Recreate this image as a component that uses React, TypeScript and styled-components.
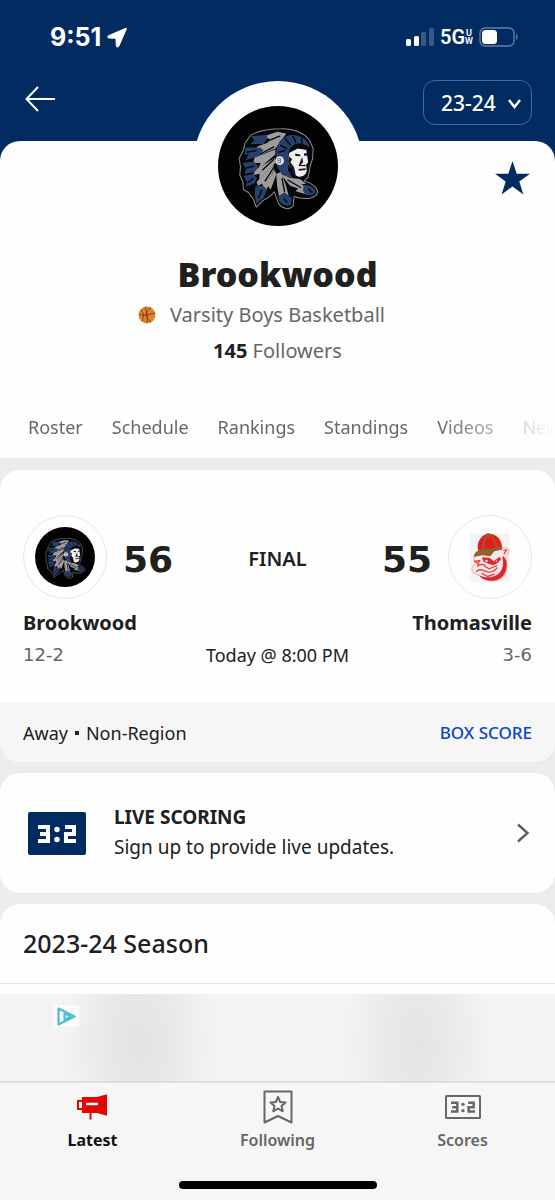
import React from 'react';
import styled, { createGlobalStyle } from 'styled-components';

const navy = '#022b62';
const ink = '#202020';
const muted = '#676767';
const wideDigits = '"DejaVu Sans", "Noto Sans", sans-serif';

const GlobalStyle = createGlobalStyle`
  * { box-sizing: border-box; }
  body { margin: 0; background: #ececec; color: ${ink}; font-family: "Noto Sans", sans-serif; font-size: 18px; line-height: 26px; }
  h1, h2, p, ul { margin: 0; padding: 0; }
  button, select { font: inherit; color: inherit; background: none; border: 0; padding: 0; cursor: pointer; }
  a { color: inherit; text-decoration: none; }
  svg { display: block; flex: none; }
`;

const Page = styled.div`
  min-height: 100vh;
  display: flex;
  flex-direction: column;
`;

const Header = styled.header`
  background: ${navy};
  color: #fff;
  padding-bottom: 36px;
  margin-bottom: -20px;
`;

const StatusBar = styled.div`
  height: 74px;
  padding: 0 37px 0 50px;
  display: flex;
  align-items: center;
  justify-content: space-between;
  font-family: Inter, sans-serif;
  font-weight: 700;
`;

const StatusGroup = styled.div`
  display: flex;
  align-items: center;
  gap: 6px;
`;

const Time = styled.span`
  font-size: 25px;
`;

const Network = styled.span`
  display: flex;
  align-items: center;
  font-size: 20px;
  font-weight: 600;
  font-family: Roboto, sans-serif;
`;

const NetworkSub = styled.span`
  display: flex;
  flex-direction: column;
  font-size: 9px;
  line-height: 8px;
  text-align: center;
`;

const NavBar = styled.div`
  display: flex;
  align-items: center;
  justify-content: space-between;
  padding: 6px 23px 0 25px;
`;

const BackButton = styled.button`
  margin-bottom: 8px;
`;

const SeasonPicker = styled.label`
  position: relative;
  display: block;
`;

const SeasonSelect = styled.select`
  appearance: none;
  width: 109px;
  height: 45px;
  padding-left: 17px;
  border: 1px solid #45689f;
  border-radius: 12px;
  font-size: 21px;
  font-weight: 500;
`;

const PickerArrow = styled.svg`
  position: absolute;
  right: 11px;
  top: 19px;
  pointer-events: none;
`;

const Profile = styled.section`
  position: relative;
  background: #fefefe;
  border-radius: 20px 20px 0 0;
  display: flex;
  flex-direction: column;
  align-items: center;
`;

const TeamBadge = styled.div`
  width: 170px;
  height: 170px;
  margin-top: -60px;
  border-radius: 50%;
  background: #fefefe;
  display: grid;
  place-items: center;
`;

const FavoriteButton = styled.button`
  position: absolute;
  right: 25px;
  top: 20px;
`;

const TeamName = styled.h1`
  font-size: 34px;
  line-height: 46px;
  font-weight: 900;
`;

const Detail = styled.p`
  display: flex;
  align-items: center;
  gap: 14px;
  margin-top: 5px;
  padding-right: 32px;
  font-size: 20px;
  color: ${muted};
`;

const Followers = styled.p`
  margin-top: 10px;
  font-size: 20px;
  color: ${muted};
  strong { color: ${ink}; }
`;

const SectionTabs = styled.nav`
  align-self: stretch;
  display: flex;
  gap: 29px;
  margin-top: 50px;
  padding: 0 0 18px 28px;
  overflow: hidden;
  white-space: nowrap;
  color: ${muted};
  mask-image: linear-gradient(to left, transparent 0, #000 120px);
`;

const Stack = styled.main`
  flex: 1;
  display: flex;
  flex-direction: column;
  gap: 11px;
  padding-top: 12px;
`;

const Card = styled.section`
  background: #fefefe;
  border-radius: 20px;
  overflow: hidden;
`;

const Matchup = styled.div`
  display: grid;
  grid-template-columns: 1fr auto 1fr;
  align-items: center;
  padding: 45px 23px 35px;
`;

const Side = styled.div<{ $away?: boolean }>`
  display: flex;
  align-items: center;
  gap: 16px;
  flex-direction: ${(p) => (p.$away ? 'row-reverse' : 'row')};
`;

const LogoRing = styled.div`
  width: 84px;
  height: 84px;
  border: 1px solid #e6e6e6;
  border-radius: 50%;
  display: grid;
  place-items: center;
`;

const Score = styled.span`
  padding-top: 5px;
  font-family: ${wideDigits};
  font-size: 36px;
  line-height: 44px;
  font-weight: 700;
`;

const GameState = styled.span`
  padding-top: 4px;
  font-size: 20px;
  font-weight: 600;
  text-align: center;
`;

const School = styled.span<{ $end?: boolean }>`
  margin-top: 11px;
  font-size: 20px;
  font-weight: 700;
  text-align: ${(p) => (p.$end ? 'right' : 'left')};
`;

const Record = styled.span<{ $end?: boolean }>`
  margin-top: 6px;
  font-family: ${wideDigits};
  color: ${muted};
  text-align: ${(p) => (p.$end ? 'right' : 'left')};
`;

const GameTime = styled.span`
  grid-column: 2;
  margin-top: 6px;
`;

const Spacer = styled.span``;

const CardFooter = styled.div`
  display: flex;
  justify-content: space-between;
  align-items: center;
  height: 59px;
  padding: 0 23px;
  background: #f6f6f6;
`;

const GameKind = styled.span`
  display: flex;
  align-items: center;
  gap: 7px;
`;

const Separator = styled.span`
  width: 4px;
  height: 4px;
  background: ${ink};
`;

const BoxScoreLink = styled.a`
  color: #0a46c4;
  font-size: 17px;
  font-weight: 500;
`;

const LiveRow = styled.a`
  display: flex;
  align-items: center;
  padding: 30px 25px 30px 28px;
  min-height: 120px;
`;

const LiveText = styled.div`
  flex: 1;
  margin: 0 0 2px 28px;
  display: flex;
  flex-direction: column;
  gap: 4px;
`;

const LiveTitle = styled.h2`
  font-size: 19px;
  line-height: 26px;
  font-weight: 700;
`;

const LiveCopy = styled.p`
  font-size: 19px;
`;

const SeasonCard = styled(Card)`
  flex: 1;
  border-radius: 20px 20px 0 0;
`;

const SeasonTitle = styled.h2`
  padding: 24px 23px 25px;
  font-size: 25px;
  line-height: 30px;
  font-weight: 500;
  border-bottom: 1px solid #e4e4e4;
`;

const AdBanner = styled.aside`
  height: 87px;
  padding: 11px 54px;
  background:
    radial-gradient(ellipse 74px 130px at 139px 48px, #e3e3e3 0, #e8e8e8 45%, #eeeeee 75%, transparent 100%),
    radial-gradient(ellipse 70px 130px at 417px 52px, #e4e4e4 0, #e9e9e9 45%, #eeeeee 75%, transparent 100%),
    #f3f3f3;
`;

const AdChoice = styled.a`
  display: grid;
  place-items: center;
  width: 25px;
  height: 22px;
  background: #fbfbfb;
`;

const Dock = styled.footer`
  background: #f6f6f6;
  border-top: 2px solid #dedede;
`;

const DockTabs = styled.nav`
  display: grid;
  grid-template-columns: repeat(3, 1fr);
  height: 98px;
`;

const DockTab = styled.button<{ $active?: boolean }>`
  display: flex;
  flex-direction: column;
  align-items: center;
  justify-content: flex-start;
  padding-top: 6px;
  font-size: 16px;
  line-height: 24px;
  font-weight: ${(p) => (p.$active ? 700 : 600)};
  color: ${(p) => (p.$active ? '#111' : muted)};
`;

const DockIcon = styled.span`
  display: grid;
  place-items: center;
  height: 36px;
  margin-bottom: 3px;
`;

const HomeIndicator = styled.div`
  width: 198px;
  height: 8px;
  margin: 0 auto 11px;
  border-radius: 4px;
  background: #000;
`;

function ChiefLogo({ size }: { size: number }) {
  return (
    <svg width={size} height={size} viewBox="69 94 358 358" role="img" aria-label="Brookwood logo">
      <circle cx="248" cy="273" r="179" fill="#020203" />
      <path d="M258 162 C292 160 326 174 341 195 L353 220 L351 252 L344 273 L338 306 L326 318 C348 322 367 338 366 352 C362 369 332 376 296 364 L293 393 C279 407 259 399 249 384 L237 350 C227 364 214 371 203 376 L183 396 L175 373 L160 352 L145 344 L143 320 L134 300 L136 275 L132 250 L145 226 L149 206 L166 181 C190 168 220 162 258 162Z" fill="#07080c" stroke="#918d8b" strokeWidth="3" strokeLinejoin="round" />
      <g fill="#a09c9c">
        <path d="M207 184 L246 171 L273 176 L257 197 L213 207 L225 194Z" />
        <path d="M188 214 L246 193 L254 201 L241 221 L190 242 L202 226 L174 229Z" />
        <path d="M178 248 L240 224 L240 239 L189 282 L196 264 L174 264Z" />
        <path d="M178 286 L238 249 L241 263 L192 313 L193 296 L175 300Z" />
        <path d="M184 321 L234 270 L236 286 L205 340 L201 325 L188 333Z" />
        <path d="M205 335 L238 285 L243 298 L226 344 L218 333 L213 348Z" />
        <path d="M243 296 L257 291 L271 329 L280 362 L266 353 L251 363 L245 331Z" />
        <path d="M256 297 L272 302 L324 331 L332 357 L300 348 L308 340 L284 332Z" />
        <path d="M282 308 L313 312 L332 326 L309 329Z" />
      </g>
      <g fill="#28406c">
        <path d="M168 184 L214 180 L216 191 L204 207 L164 208 L178 198Z" />
        <path d="M151 218 L194 218 L205 226 L190 243 L151 256 L161 238 L148 239Z" />
        <path d="M142 263 L178 260 L190 276 L177 292 L148 296 L153 281Z" />
        <path d="M145 303 L174 296 L185 309 L178 325 L151 335 L156 321Z" />
        <path d="M180 334 L204 332 L215 343 L206 366 L184 386 L179 363Z" />
        <path d="M249 363 L266 354 L289 367 L287 388 C275 396 258 388 251 377Z" />
        <path d="M326 330 C347 329 361 343 360 351 C354 363 339 361 329 359 L322 345Z" />
        <path d="M243 250 C239 220 253 190 279 182 C309 176 337 193 343 218 L324 208 C298 200 282 216 279 235 L278 285 L293 310 L260 299 L246 276Z" />
      </g>
      <g fill="none" stroke="#05070c" strokeWidth="4">
        <path d="M250 232 L270 226 M254 211 L275 221 M269 190 L285 211 M293 184 L302 205 M318 190 L320 209" />
        <path d="M201 286 L236 253 M194 238 L237 215 M209 319 L236 276 M216 199 L255 183 M260 310 L268 352 M276 314 L317 338" />
        <path d="M154 232 L184 227 M153 279 L176 273 M157 323 L174 310 M189 370 L200 344 M265 370 L276 382 M338 340 L350 352" />
      </g>
      <path d="M281 232 L305 220 L332 221 L335 243 L338 262 L332 269 L334 289 C328 307 310 309 300 300 L289 281 L279 266Z" fill="#f1efef" />
      <path d="M299 236 L314 239 L315 244 L300 243Z M326 235 L335 235 L334 242 L326 243Z M320 246 L323 262 L315 270 L330 269 L331 274 L309 273Z M308 282 L331 280 L330 285 L312 287Z M282 245 L290 253 L285 262 L296 277 L301 300 L287 283 L278 260Z" fill="#17171a" />
      <path d="M281 223 L335 212 L339 226 L307 221 L281 234Z" fill="#07080c" />
      <circle cx="253" cy="257" r="13" fill="#e3e1e1" />
      <path d="M248 250 V264 M256 250 V264 M248 251 H256 M248 257 H256 M248 263 H256" stroke="#55555b" strokeWidth="2" />
    </svg>
  );
}

function BulldogLogo() {
  return (
    <svg width="40" height="49" viewBox="69 67 120 146" role="img" aria-label="Thomasville logo">
      <path d="M69 67H189V213H69Z" fill="#f5f4f3" />
      <path d="M160 112 L174 110 L184 114 L184 128 L177 141 L180 165 C181 192 162 211 137 210 C119 210 101 203 96 193 L80 187 L74 174 L82 158 L80 141 L94 133Z" fill="#fbe6e6" stroke="#eb8c8f" strokeWidth="2" />
      <path d="M170 136 L178 150 C184 182 168 208 137 210 C119 210 101 203 97 193 C116 203 139 201 153 190 C169 177 171 158 166 140Z" fill="#df252c" />
      <path d="M104 139 L128 141 L140 151 L158 138 L162 146 L151 157 L139 163 L124 159 L110 153Z" fill="#dc2a33" />
      <path d="M112 147 L124 150 L119 154Z M145 152 L152 147 L149 153Z" fill="#fff" />
      <path d="M84 151 L98 149 L93 159Z M90 166 C99 158 112 160 116 168 L126 174 L151 164 M87 183 C97 172 106 178 119 182 C130 187 143 181 151 170 M104 187 L122 197 L143 190 M169 118 L178 118 L171 130" fill="none" stroke="#e0444b" strokeWidth="4" />
      <path d="M92 111 C91 87 108 70 124 68 C149 69 167 88 165 114 L141 116 L119 120 L95 125Z" fill="#e51c20" />
      <path d="M80 138 C82 119 104 112 128 114 L164 108 L167 116 L142 121 L130 136 L107 133Z" fill="#8c632f" />
      <path d="M124 68 C114 79 108 94 108 116 M127 69 C139 79 147 94 148 113 M124 68 V84" fill="none" stroke="#96602c" strokeWidth="5" />
      <path d="M118 90 V105 H126" fill="none" stroke="#9a3c25" strokeWidth="3" />
    </svg>
  );
}

function Basketball() {
  return (
    <svg width="18" height="18" viewBox="0 0 18 18" aria-hidden="true">
      <circle cx="9" cy="9" r="8.5" fill="#e3822b" />
      <path d="M1 8 C6 11 12 8 17 7 M7 1 C9 5 10 12 9 17 M13 2 C7 5 6 11 13 16 M3 4 C6 7 6 11 4 15" fill="none" stroke="#5b3a20" strokeWidth="0.8" />
    </svg>
  );
}

/* Seven-segment style "3:2" used by both scoreboard icons. */
function ScoreDigits({ color }: { color: string }) {
  return (
    <g>
      <path d="M0 2 H10 V16 H0 M2 9 H10 M27 2 H36 V9 H28 V16 H38" fill="none" stroke={color} strokeWidth="4" />
      <circle cx="19" cy="4.500" r="2.700" fill={color} />
      <circle cx="19" cy="14.500" r="2.700" fill={color} />
    </g>
  );
}

const sections = ['Roster', 'Schedule', 'Rankings', 'Standings', 'Videos', 'News'];

export default function App() {
  return (
    <Page>
      <GlobalStyle />
      <Header>
        <StatusBar>
          <StatusGroup>
            <Time>9:51</Time>
            <svg width="20" height="21" viewBox="0 0 20 21" aria-hidden="true">
              <path d="M19 1.200 L1.500 8.700 C.3 9.300 .6 10.900 2 11 L9 11.200 L9.300 18.800 C9.400 20.300 11.200 20.500 11.800 19.200 L19.300 2 C19.600 1.300 19.400 1 19 1.200Z" fill="#fff" stroke="#fff" strokeLinejoin="round" />
            </svg>
          </StatusGroup>
          <StatusGroup>
            <svg width="28" height="18" viewBox="0 0 28 18" aria-hidden="true">
              <rect x="0" y="11" width="5" height="7" rx="1.500" fill="#fff" />
              <rect x="8" y="8" width="5" height="10" rx="1.500" fill="#fff" />
              <rect x="15" y="4" width="5" height="14" rx="1.500" fill="#38588a" />
              <rect x="23" y="0" width="5" height="18" rx="1.500" fill="#38588a" />
            </svg>
            <Network>
              5G
              <NetworkSub>
                <span>U</span>
                <span>W</span>
              </NetworkSub>
            </Network>
            <svg width="39" height="20" viewBox="0 0 39 20" aria-hidden="true">
              <rect x="1" y="1" width="34" height="18" rx="5" fill="none" stroke="#6680a8" strokeWidth="1.300" />
              <rect x="3" y="3" width="15" height="14" rx="3.500" fill="#fff" />
              <path d="M37 7 C39 8 39 12 37 13Z" fill="#6680a8" />
            </svg>
          </StatusGroup>
        </StatusBar>
        <NavBar>
          <BackButton aria-label="Back">
            <svg width="30" height="26" viewBox="0 0 30 26" fill="none" stroke="#fff" strokeWidth="2">
              <path d="M13 1 L1.500 13 L13 25 M2 13 H30" />
            </svg>
          </BackButton>
          <SeasonPicker>
            <SeasonSelect aria-label="Season" defaultValue="23-24">
              <option>23-24</option>
            </SeasonSelect>
            <PickerArrow width="13" height="10" viewBox="0 0 13 10" fill="none" stroke="#fff" strokeWidth="2.500">
              <path d="M1 1 L6.500 8 L12 1" />
            </PickerArrow>
          </SeasonPicker>
        </NavBar>
      </Header>

      <Profile>
        <TeamBadge>
          <ChiefLogo size={120} />
        </TeamBadge>
        <FavoriteButton aria-label="Favorite">
          <svg width="35" height="34" viewBox="0 0 35 34">
            <path d="M17.500 0 L21.700 12.700 H35 L24.300 20.600 L28.400 33.500 L17.500 25.500 L6.600 33.500 L10.700 20.600 L0 12.700 H13.300Z" fill={navy} />
          </svg>
        </FavoriteButton>
        <TeamName>Brookwood</TeamName>
        <Detail>
          <Basketball />
          Varsity Boys Basketball
        </Detail>
        <Followers>
          <strong>145</strong> Followers
        </Followers>
        <SectionTabs>
          {sections.map((name) => (
            <a href="#" key={name}>{name}</a>
          ))}
        </SectionTabs>
      </Profile>

      <Stack>
        <Card>
          <Matchup>
            <Side>
              <LogoRing><ChiefLogo size={60} /></LogoRing>
              <Score>56</Score>
            </Side>
            <GameState>FINAL</GameState>
            <Side $away>
              <LogoRing><BulldogLogo /></LogoRing>
              <Score>55</Score>
            </Side>
            <School>Brookwood</School>
            <Spacer />
            <School $end>Thomasville</School>
            <Record>12-2</Record>
            <GameTime>Today @ 8:00 PM</GameTime>
            <Record $end>3-6</Record>
          </Matchup>
          <CardFooter>
            <GameKind>
              <span>Away</span>
              <Separator />
              <span>Non-Region</span>
            </GameKind>
            <BoxScoreLink href="#">BOX SCORE</BoxScoreLink>
          </CardFooter>
        </Card>

        <Card>
          <LiveRow href="#">
            <svg width="58" height="43" viewBox="0 0 58 43" aria-hidden="true">
              <rect width="58" height="43" rx="2" fill={navy} />
              <g transform="translate(10 13)"><ScoreDigits color="#fff" /></g>
            </svg>
            <LiveText>
              <LiveTitle>LIVE SCORING</LiveTitle>
              <LiveCopy>Sign up to provide live updates.</LiveCopy>
            </LiveText>
            <svg width="14" height="20" viewBox="0 0 14 20" fill="none" stroke="#5f5f5f" strokeWidth="2.400" aria-hidden="true">
              <path d="M2 1.500 L11.500 10 L2 18.500" />
            </svg>
          </LiveRow>
        </Card>

        <SeasonCard>
          <SeasonTitle>2023-24 Season</SeasonTitle>
        </SeasonCard>
      </Stack>

      <AdBanner>
        <AdChoice href="#" aria-label="AdChoices">
          <svg width="19" height="19" viewBox="0 0 19 19" fill="none" stroke="#4fbfd2" strokeWidth="2.200" strokeLinejoin="round">
            <path d="M1.500 1.500 L17.500 9.500 L1.500 17.500Z M7.500 6 V13 L13.500 9.500 L7.500 6" />
          </svg>
        </AdChoice>
      </AdBanner>

      <Dock>
        <DockTabs>
          <DockTab $active>
            <DockIcon>
              <svg width="31" height="26" viewBox="0 0 31 26" aria-hidden="true">
                <path d="M5 3 L20 3 L29 0.500 Q30 0 30 1 V21 Q30 22 29 21.600 L20 19 L5 19Z" fill="#e40505" />
                <path d="M5 7 H1 V15 H5 M13.500 19 V25.500" fill="none" stroke="#e40505" strokeWidth="2" />
                <path d="M9 10 H21" stroke="#fff" strokeWidth="2.500" />
              </svg>
            </DockIcon>
            Latest
          </DockTab>
          <DockTab>
            <DockIcon>
              <svg width="30" height="34" viewBox="0 0 30 34" fill="none" stroke={muted} strokeWidth="2" strokeLinejoin="round" aria-hidden="true">
                <path d="M1.500 1.500 H28.500 V32.500 L15 26 L1.500 32.500Z" />
                <path d="M15 7 L17.200 12 L22.500 12.500 L18.500 16 L19.700 21.300 L15 18.500 L10.300 21.300 L11.500 16 L7.500 12.500 L12.800 12Z" />
              </svg>
            </DockIcon>
            Following
          </DockTab>
          <DockTab>
            <DockIcon>
              <svg width="36" height="24" viewBox="0 0 36 24" aria-hidden="true">
                <rect x="1" y="1" width="34" height="22" rx="0.500" fill="none" stroke={muted} strokeWidth="2" />
                <g transform="translate(6 6.500) scale(.63)"><ScoreDigits color={muted} /></g>
              </svg>
            </DockIcon>
            Scores
          </DockTab>
        </DockTabs>
        <HomeIndicator />
      </Dock>
    </Page>
  );
}
